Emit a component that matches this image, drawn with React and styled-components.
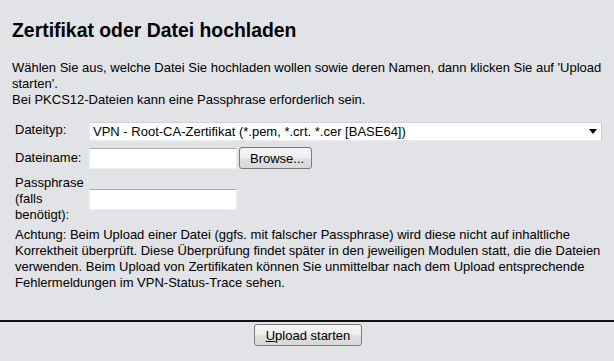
import React from 'react'
import styled, { createGlobalStyle } from 'styled-components'

const GlobalStyle = createGlobalStyle`
    html, body {
        margin: 0;
        padding: 0;
        background: #e1e3e6;
    }
    body {
        font-family: "Liberation Sans", Arial, sans-serif;
        font-size: 13px;
        color: #000;
    }
`

const Page = styled.div`
    width: 614px;
    height: 361px;
    background: #e1e3e6;
    display: flex;
    flex-direction: column;
`

const Main = styled.div`
    padding: 19px 12px 0 12px;
`

const Title = styled.h1`
    margin: 0;
    font-size: 19.4px;
    line-height: 22px;
    font-weight: bold;
`

const Intro = styled.p`
    margin: 19px 0 0 0;
    line-height: 16px;
`

const Form = styled.div`
    margin-top: 14px;
    padding-left: 3px;
    display: flex;
    flex-direction: column;
    gap: 6px;
`

const Row = styled.div`
    display: grid;
    grid-template-columns: 74px 1fr;
    align-items: center;
`

const Label = styled.div`
    line-height: 16px;
    margin-top: ${props => props.$shift || 0}px;
`

const Field = styled.div`
    display: flex;
    align-items: center;
    gap: 2px;
`

const SelectWrap = styled.div`
    position: relative;
    width: 513px;
`

const Select = styled.select`
    appearance: none;
    -webkit-appearance: none;
    width: 100%;
    height: 19px;
    margin: 0;
    padding: 0 0 0 3px;
    font-family: inherit;
    font-size: 13px;
    color: #000;
    background: #fff;
    border: 1px solid #e9eaec;
    border-top-color: #cfd1d4;
    border-right-color: #c9cbce;
    border-radius: 0;
    outline: none;
`

const Arrow = styled.svg`
    position: absolute;
    right: 5px;
    top: 7px;
    pointer-events: none;
`

const TextInput = styled.input`
    box-sizing: border-box;
    width: 148px;
    height: 21px;
    margin: 0;
    padding: 0 3px;
    font-family: inherit;
    font-size: 13px;
    background: #fff;
    border: 1px solid #eef0f2;
    border-top-color: #a9abae;
    outline: none;
`

const Button = styled.button`
    box-sizing: border-box;
    height: 22px;
    margin: 0;
    padding: 0 10px;
    font-family: inherit;
    font-size: 13px;
    color: #000;
    background: linear-gradient(#f4f4f4, #f0f0f0 45%, #e0e0e0 55%, #d8d8d8);
    border: 1px solid #7a7a7a;
    border-radius: 3px;
    cursor: default;
    width: ${props => props.$width}px;
`

const Note = styled.p`
    margin: 4px 0 0 3px;
    line-height: 16px;
`

const Footer = styled.div`
    margin-top: 29px;
    border-top: 2px solid #111;
    padding: 2px 0 0 2px;
    display: flex;
    justify-content: center;
`

const Key = styled.span`
    text-decoration: underline;
`

const App = () => {
  return (
    <Page>
        <GlobalStyle/>
        <Main>
            <Title>Zertifikat oder Datei hochladen</Title>
            <Intro>
                Wählen Sie aus, welche Datei Sie hochladen wollen sowie deren Namen, dann klicken Sie auf 'Upload starten'.
                <br/>
                Bei PKCS12-Dateien kann eine Passphrase erforderlich sein.
            </Intro>
            <Form>
                <Row>
                    <Label $shift={-3}>Dateityp:</Label>
                    <Field>
                        <SelectWrap>
                            <Select defaultValue='root'>
                                <option value='root'>VPN - Root-CA-Zertifikat (*.pem, *.crt. *.cer [BASE64])</option>
                            </Select>
                            <Arrow width='8' height='5' viewBox='0 0 8 5'>
                                <path d='M0 0 H8 L4 5 Z' fill='#000'/>
                            </Arrow>
                        </SelectWrap>
                    </Field>
                </Row>
                <Row>
                    <Label>Dateiname:</Label>
                    <Field>
                        <TextInput type='text'/>
                        <Button $width={73}>Browse...</Button>
                    </Field>
                </Row>
                <Row>
                    <Label>Passphrase (falls benötigt):</Label>
                    <Field>
                        <TextInput type='password'/>
                    </Field>
                </Row>
            </Form>
            <Note>
                Achtung: Beim Upload einer Datei (ggfs. mit falscher Passphrase) wird diese nicht auf inhaltliche
                Korrektheit überprüft. Diese Überprüfung findet später in den jeweiligen Modulen statt, die die Dateien
                verwenden. Beim Upload von Zertifikaten können Sie unmittelbar nach dem Upload entsprechende
                Fehlermeldungen im VPN-Status-Trace sehen.
            </Note>
        </Main>
        <Footer>
            <Button $width={108}><Key>U</Key>pload starten</Button>
        </Footer>
    </Page>
  )
}

export default App
